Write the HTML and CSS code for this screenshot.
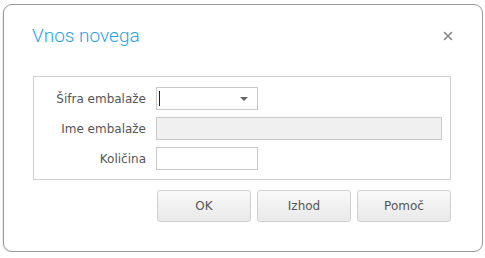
FILE: index.html
```html
<!DOCTYPE html>
<html lang="sl">
<head>
<meta charset="utf-8">
<title>Vnos novega</title>
<link rel="stylesheet" href="styles.css">
</head>
<body>
<div class="dialog">
  <div class="header">
    <h1 class="title">Vnos novega</h1>
    <span class="close" aria-label="Zapri">
      <svg width="10" height="10" viewBox="0 0 10 10"><path d="M1 1L9 9M9 1L1 9" stroke="#8a8a8a" stroke-width="1.7"/></svg>
    </span>
  </div>
  <div class="panel">
    <label class="lbl">Šifra embalaže</label>
    <div class="combo"><span class="caret"></span><span class="arrow"></span></div>
    <label class="lbl">Ime embalaže</label>
    <div class="field field-wide field-disabled"></div>
    <label class="lbl">Količina</label>
    <div class="field"></div>
  </div>
  <div class="buttons">
    <button class="btn">OK</button>
    <button class="btn">Izhod</button>
    <button class="btn">Pomoč</button>
  </div>
</div>
</body>
</html>
```

FILE: styles.css
```css
html, body {
  margin: 0;
  padding: 0;
  background: #ffffff;
}
body {
  font-family: "DejaVu Sans", sans-serif;
  font-size: 12px;
  color: #555;
}
.dialog {
  box-sizing: border-box;
  margin: 4px 2px 0 3px;
  width: 480px;
  height: 248px;
  border: 1px solid #9a9a9a;
  border-radius: 9px;
  background: #fff;
  box-shadow: -1px 1px 1px rgba(0,0,0,0.08);
}
.header {
  display: flex;
  align-items: center;
  justify-content: space-between;
  padding: 16px 29px 0 28px;
  height: 30px;
}
.title {
  margin: 0;
  font-family: Roboto, "Open Sans", sans-serif;
  font-weight: 300;
  font-size: 19px;
  color: #2aa2df;
  line-height: 26px;
}
.close {
  display: flex;
  width: 10px;
  height: 10px;
}
.panel {
  box-sizing: border-box;
  margin: 25px 0 0 29px;
  width: 418px;
  height: 104px;
  border: 1px solid #cfcfcf;
  padding: 10px 7px 0 0;
  display: grid;
  grid-template-columns: 112px 1fr;
  column-gap: 10px;
  row-gap: 7px;
  grid-auto-rows: 23px;
  align-items: center;
}
.lbl {
  text-align: right;
  color: #555;
}
.field, .combo {
  box-sizing: border-box;
  height: 23px;
  width: 102px;
  border: 1px solid #c9c9c9;
  background: #fff;
}
.field-wide {
  width: 286px;
}
.field-disabled {
  background: #f0f0f0;
}
.combo {
  display: flex;
  align-items: center;
  justify-content: space-between;
  padding: 0 9px 0 2px;
}
.caret {
  width: 1px;
  height: 15px;
  background: #222;
}
.arrow {
  width: 0;
  height: 0;
  border-left: 4px solid transparent;
  border-right: 4px solid transparent;
  border-top: 4px solid #666;
}
.buttons {
  display: flex;
  justify-content: flex-end;
  gap: 6px;
  margin: 10px 31px 0 0;
}
.btn {
  box-sizing: border-box;
  width: 94px;
  height: 32px;
  border: 1px solid #d0d0d0;
  border-radius: 3px;
  background: linear-gradient(#f9f9f9, #e9e9e9);
  font-family: "DejaVu Sans", sans-serif;
  font-size: 12px;
  font-weight: 400;
  color: #555;
  padding: 0;
}
```
